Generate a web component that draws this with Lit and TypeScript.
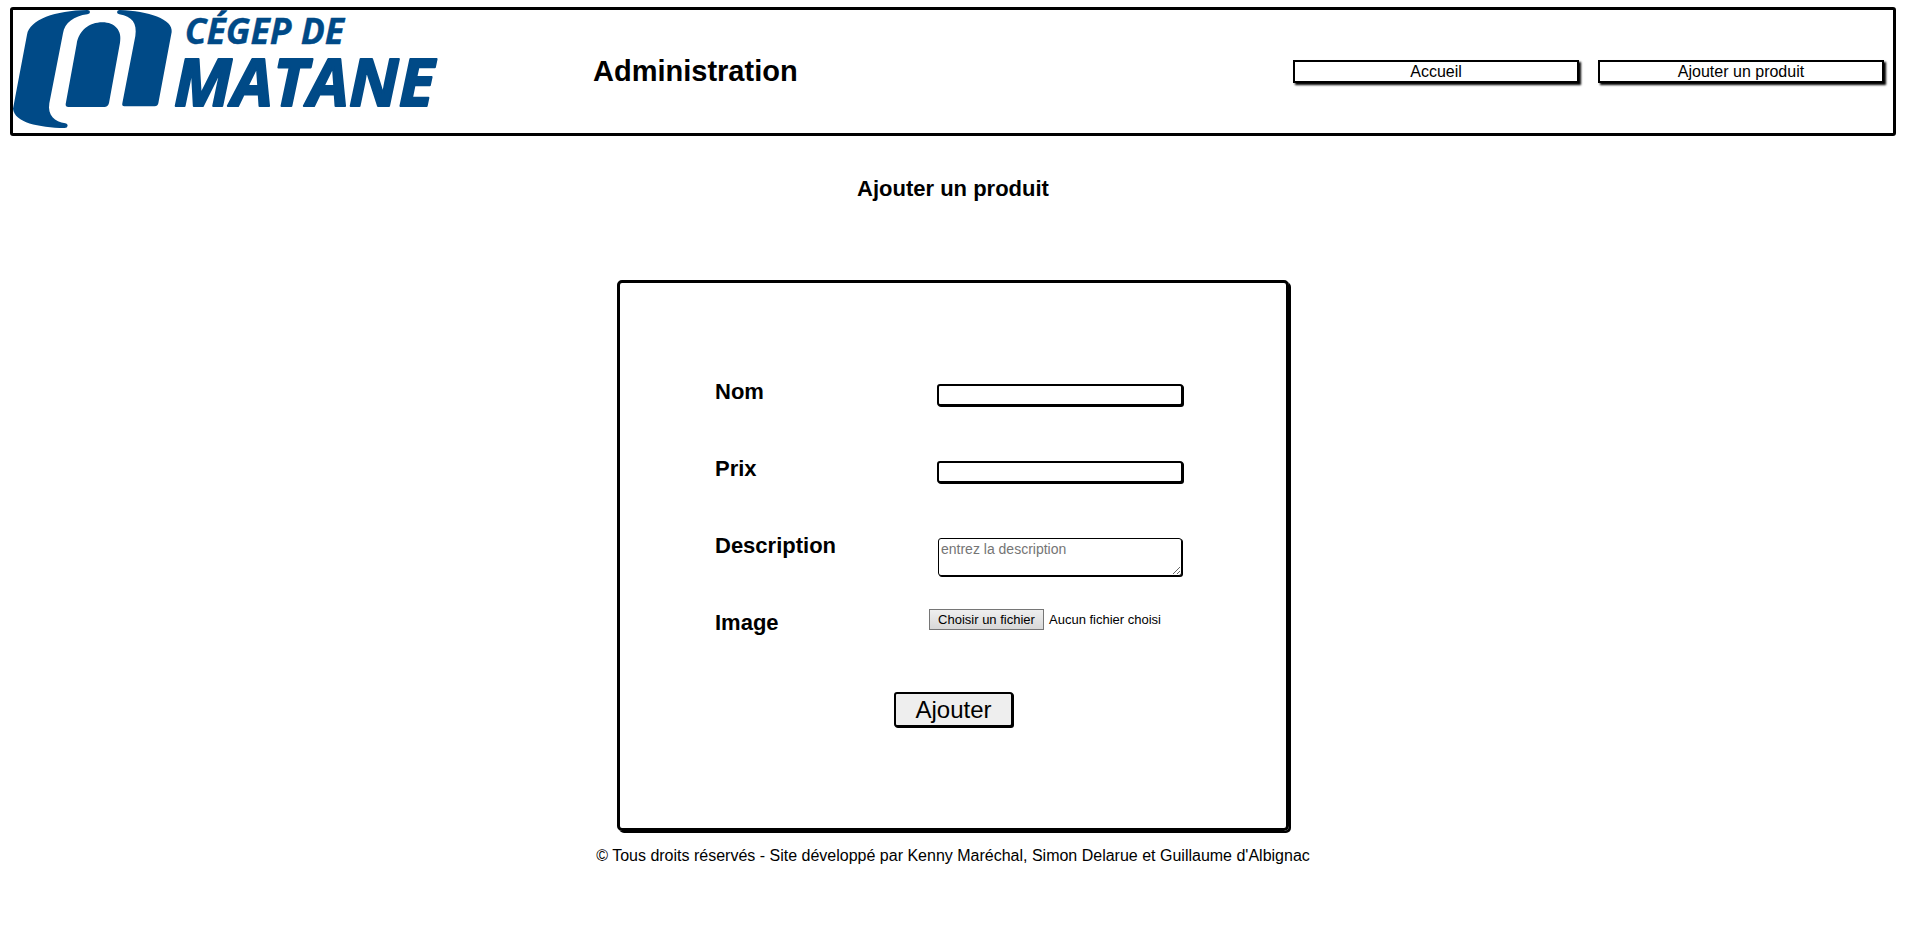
import { LitElement, html, css } from "lit";
import { customElement, state } from "lit/decorators.js";

@customElement("cegep-logo")
export class CegepLogo extends LitElement {
  static styles = css`
    :host { display: block; }
    .logo { display: block; width: 430px; max-width: 100%; height: auto; overflow: visible; }
    .mark { fill: #004a87; }
    .word {
      fill: #004a87;
      stroke: #004a87;
      stroke-linejoin: round;
      font-family: "Open Sans", sans-serif;
      font-weight: 700;
      font-style: italic;
    }
    .small { font-size: 107px; stroke-width: 1px; }
    .large { font-size: 197px; stroke-width: 6px; }
  `;

  render() {
    return html`
      <svg class="logo" viewBox="39 30 1290 369" role="img" aria-label="Cégep de Matane">
        <path class="mark" d="M262 30 Q270 30 270 36 Q270 42 262 43 C222 48 194 68 189 100 L148 310 C142 345 164 367 196 370 Q203 371 203 377 Q202 384 194 384 C115 382 44 368 39 326 L81 104 C90 58 165 32 262 30Z" />
        <path class="mark" d="M197 312 L230 132 C236 92 268 67 307 67 C345 67 367 92 360 128 L327 309 Q324 321 313 321 L205 321 Q196 321 197 312Z" />
        <path class="mark" d="M359 30 C445 33 520 58 515 96 L475 310 Q473 319 464 319 L373 319 Q365 319 367 310 L406 108 C412 70 396 49 358 43 Q351 41 351 36 Q352 30 359 30Z" />
        <text class="word small" x="554" y="133">CÉGEP DE</text>
        <text class="word large" x="522" y="318">MATANE</text>
      </svg>
    `;
  }
}

@customElement("app-root")
export class AppRoot extends LitElement {
  static styles = css`
    :host {
      display: block;
      padding: 7px 14px 16px 10px;
      font: 16px/20px "Liberation Sans", Arial, sans-serif;
      color: #000;
      background: #fff;
    }
    * { box-sizing: border-box; }
    .header {
      display: grid;
      grid-template-columns: 580fr 700fr 600fr;
      align-items: center;
      border: 3px solid #000;
      border-radius: 3px;
    }
    .title { margin: 0; padding-bottom: 2px; font-size: 29px; line-height: 36px; }
    .nav {
      display: grid;
      grid-template-columns: 1fr 1fr;
      gap: 19px;
      padding-right: 9px;
    }
    .nav-link {
      border: 2px solid #000;
      box-shadow: 2px 2px 2px #000;
      color: #000;
      line-height: 19px;
      text-align: center;
      text-decoration: none;
    }
    .subtitle {
      margin: 38px 0 76px;
      font-size: 22px;
      line-height: 30px;
      text-align: center;
    }
    .card {
      max-width: 672px;
      margin: 0 auto;
      padding: 94px 94px 101px 95px;
      border: 3px solid #000;
      border-radius: 5px;
      box-shadow: 2px 2px #000;
    }
    .row {
      display: grid;
      grid-template-columns: 214px 1fr;
      align-items: start;
      min-height: 77px;
    }
    .label { font-size: 22px; line-height: 30px; font-weight: bold; }
    .field {
      width: 246px;
      height: 22px;
      margin: 7px 8px 0;
      padding: 1px 2px;
      border: 2px solid #000;
      border-radius: 3px;
      box-shadow: 1px 1px #000;
      font: inherit;
      background: #fff;
    }
    .area {
      width: 244px;
      height: 38px;
      margin: 7px 9px 0;
      padding: 2px;
      border: 1px solid #000;
      border-radius: 3px;
      box-shadow: 1px 1px #000;
      font: 14px/16px "Liberation Sans", Arial, sans-serif;
      background: #fff;
    }
    .area::placeholder { color: #757575; }
    .file {
      display: flex;
      align-items: center;
      gap: 5px;
      margin-top: 1px;
      font-size: 13px;
      line-height: 19px;
      white-space: nowrap;
    }
    .file-input {
      position: absolute;
      width: 1px;
      height: 1px;
      margin: 0;
      opacity: 0;
    }
    .file-button {
      min-width: 115px;
      border: 1px solid #767676;
      background: linear-gradient(#efefef, #d8d8d8);
      text-align: center;
    }
    .file-input:focus-visible + .file-button { outline: 2px solid #004a87; }
    .submit {
      display: block;
      width: 119px;
      height: 35px;
      margin: 7px auto 0;
      padding: 0;
      border: 2px solid #000;
      border-radius: 3px;
      box-shadow: 1px 1px #000;
      background: #eee;
      color: #000;
      font: 24px/30px "Liberation Sans", Arial, sans-serif;
    }
    .footer { margin-top: 15px; text-align: center; }
  `;

  @state() private fileName = "";

  private onFile(e: Event) {
    this.fileName = (e.target as HTMLInputElement).files?.[0]?.name ?? "";
  }

  render() {
    return html`
      <header class="header">
        <cegep-logo></cegep-logo>
        <h1 class="title">Administration</h1>
        <nav class="nav">
          <a class="nav-link" href="#accueil">Accueil</a>
          <a class="nav-link" href="#ajouter">Ajouter un produit</a>
        </nav>
      </header>
      <main>
        <h2 class="subtitle">Ajouter un produit</h2>
        <form class="card" @submit=${(e: Event) => e.preventDefault()}>
          <div class="row">
            <label class="label" for="nom">Nom</label>
            <input class="field" id="nom" name="nom" type="text" />
          </div>
          <div class="row">
            <label class="label" for="prix">Prix</label>
            <input class="field" id="prix" name="prix" type="text" />
          </div>
          <div class="row">
            <label class="label" for="description">Description</label>
            <textarea class="area" id="description" name="description" placeholder="entrez la description"></textarea>
          </div>
          <div class="row">
            <label class="label" for="image">Image</label>
            <div class="file">
              <input class="file-input" id="image" name="image" type="file" @change=${this.onFile} />
              <label class="file-button" for="image">Choisir un fichier</label>
              <span>${this.fileName || "Aucun fichier choisi"}</span>
            </div>
          </div>
          <button class="submit" type="submit">Ajouter</button>
        </form>
      </main>
      <footer class="footer">
        © Tous droits réservés - Site développé par Kenny Maréchal, Simon Delarue et Guillaume d'Albignac
      </footer>
    `;
  }
}
